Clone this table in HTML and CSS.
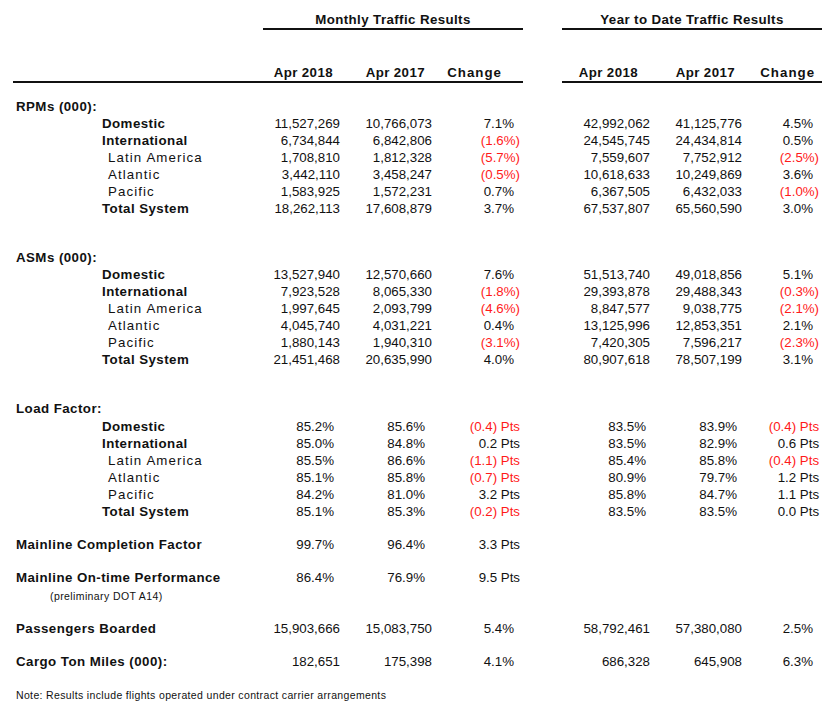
FILE: index.html
```html
<!DOCTYPE html>
<html lang="en">
<head>
<meta charset="utf-8">
<title>Traffic Results</title>
<link rel="stylesheet" href="styles.css">
</head>
<body>
<table class="report">
  <colgroup>
    <col class="c-lbl"><col class="c-a"><col class="c-b"><col class="c-c"><col class="c-sp"><col class="c-d"><col class="c-e"><col class="c-f">
  </colgroup>
  <thead>
    <tr class="title-row">
      <th class="blank"></th>
      <th colspan="3" class="grp">Monthly Traffic Results</th>
      <th class="blank"></th>
      <th colspan="3" class="grp">Year to Date Traffic Results</th>
    </tr>
    <tr class="col-row">
      <th class="line"></th>
      <th class="line h-a">Apr 2018</th>
      <th class="line h-b">Apr 2017</th>
      <th class="line h-c chg">Change</th>
      <th class="blank"></th>
      <th class="line h-d">Apr 2018</th>
      <th class="line h-e">Apr 2017</th>
      <th class="line h-f chg">Change</th>
    </tr>
  </thead>
  <tbody>
    <tr class="g15"><td class="l1">RPMs (000):</td><td></td><td></td><td></td><td></td><td></td><td></td><td></td></tr>
    <tr><td class="l2">Domestic</td><td>11,527,269</td><td>10,766,073</td><td class="pa">7.1%</td><td></td><td>42,992,062</td><td>41,125,776</td><td class="pa">4.5%</td></tr>
    <tr><td class="l2">International</td><td>6,734,844</td><td>6,842,806</td><td class="neg">(1.6%)</td><td></td><td>24,545,745</td><td>24,434,814</td><td class="pa">0.5%</td></tr>
    <tr><td class="l3">Latin America</td><td>1,708,810</td><td>1,812,328</td><td class="neg">(5.7%)</td><td></td><td>7,559,607</td><td>7,752,912</td><td class="neg">(2.5%)</td></tr>
    <tr><td class="l3">Atlantic</td><td>3,442,110</td><td>3,458,247</td><td class="neg">(0.5%)</td><td></td><td>10,618,633</td><td>10,249,869</td><td class="pa">3.6%</td></tr>
    <tr><td class="l3">Pacific</td><td>1,583,925</td><td>1,572,231</td><td class="pa">0.7%</td><td></td><td>6,367,505</td><td>6,432,033</td><td class="neg">(1.0%)</td></tr>
    <tr><td class="l2">Total System</td><td>18,262,113</td><td>17,608,879</td><td class="pa">3.7%</td><td></td><td>67,537,807</td><td>65,560,590</td><td class="pa">3.0%</td></tr>

    <tr class="g32"><td class="l1">ASMs (000):</td><td></td><td></td><td></td><td></td><td></td><td></td><td></td></tr>
    <tr><td class="l2">Domestic</td><td>13,527,940</td><td>12,570,660</td><td class="pa">7.6%</td><td></td><td>51,513,740</td><td>49,018,856</td><td class="pa">5.1%</td></tr>
    <tr><td class="l2">International</td><td>7,923,528</td><td>8,065,330</td><td class="neg">(1.8%)</td><td></td><td>29,393,878</td><td>29,488,343</td><td class="neg">(0.3%)</td></tr>
    <tr><td class="l3">Latin America</td><td>1,997,645</td><td>2,093,799</td><td class="neg">(4.6%)</td><td></td><td>8,847,577</td><td>9,038,775</td><td class="neg">(2.1%)</td></tr>
    <tr><td class="l3">Atlantic</td><td>4,045,740</td><td>4,031,221</td><td class="pa">0.4%</td><td></td><td>13,125,996</td><td>12,853,351</td><td class="pa">2.1%</td></tr>
    <tr><td class="l3">Pacific</td><td>1,880,143</td><td>1,940,310</td><td class="neg">(3.1%)</td><td></td><td>7,420,305</td><td>7,596,217</td><td class="neg">(2.3%)</td></tr>
    <tr><td class="l2">Total System</td><td>21,451,468</td><td>20,635,990</td><td class="pa">4.0%</td><td></td><td>80,907,618</td><td>78,507,199</td><td class="pa">3.1%</td></tr>

    <tr class="g32"><td class="l1">Load Factor:</td><td></td><td></td><td></td><td></td><td></td><td></td><td></td></tr>
    <tr class="g1"><td class="l2">Domestic</td><td class="pa">85.2%</td><td class="pb">85.6%</td><td class="neg">(0.4) Pts</td><td></td><td class="pd">83.5%</td><td class="pe">83.9%</td><td class="neg">(0.4) Pts</td></tr>
    <tr><td class="l2">International</td><td class="pa">85.0%</td><td class="pb">84.8%</td><td>0.2 Pts</td><td></td><td class="pd">83.5%</td><td class="pe">82.9%</td><td>0.6 Pts</td></tr>
    <tr><td class="l3">Latin America</td><td class="pa">85.5%</td><td class="pb">86.6%</td><td class="neg">(1.1) Pts</td><td></td><td class="pd">85.4%</td><td class="pe">85.8%</td><td class="neg">(0.4) Pts</td></tr>
    <tr><td class="l3">Atlantic</td><td class="pa">85.1%</td><td class="pb">85.8%</td><td class="neg">(0.7) Pts</td><td></td><td class="pd">80.9%</td><td class="pe">79.7%</td><td>1.2 Pts</td></tr>
    <tr><td class="l3">Pacific</td><td class="pa">84.2%</td><td class="pb">81.0%</td><td>3.2 Pts</td><td></td><td class="pd">85.8%</td><td class="pe">84.7%</td><td>1.1 Pts</td></tr>
    <tr><td class="l2">Total System</td><td class="pa">85.1%</td><td class="pb">85.3%</td><td class="neg">(0.2) Pts</td><td></td><td class="pd">83.5%</td><td class="pe">83.5%</td><td>0.0 Pts</td></tr>

    <tr class="g16"><td class="l1">Mainline Completion Factor</td><td class="pa">99.7%</td><td class="pb">96.4%</td><td>3.3 Pts</td><td></td><td></td><td></td><td></td></tr>
    <tr class="g16"><td class="l1">Mainline On-time Performance</td><td class="pa">86.4%</td><td class="pb">76.9%</td><td>9.5 Pts</td><td></td><td></td><td></td><td></td></tr>
    <tr class="small-row"><td class="note-sub">(preliminary DOT A14)</td><td></td><td></td><td></td><td></td><td></td><td></td><td></td></tr>

    <tr class="g14"><td class="l1">Passengers Boarded</td><td>15,903,666</td><td>15,083,750</td><td class="pa">5.4%</td><td></td><td>58,792,461</td><td>57,380,080</td><td class="pa">2.5%</td></tr>
    <tr class="g16"><td class="l1">Cargo Ton Miles (000):</td><td>182,651</td><td>175,398</td><td class="pa">4.1%</td><td></td><td>686,328</td><td>645,908</td><td class="pa">6.3%</td></tr>

    <tr class="g17"><td colspan="8" class="note">Note: Results include flights operated under contract carrier arrangements</td></tr>
  </tbody>
</table>
</body>
</html>
```

FILE: styles.css
```css
html, body {
  margin: 0;
  padding: 0;
  background: #ffffff;
}

body {
  font-family: "Liberation Sans", Arial, sans-serif;
  color: #111111;
}

.report {
  border-collapse: separate;
  border-spacing: 0;
  table-layout: fixed;
  width: 809px;
  margin-left: 13px;
  font-size: 13.3px;
}

.c-lbl { width: 250px; }
.c-a { width: 80px; }
.c-b { width: 92px; }
.c-c { width: 88px; }
.c-sp { width: 39px; }
.c-d { width: 91px; }
.c-e { width: 92px; }
.c-f { width: 77px; }

.report th,
.report td {
  padding: 0 3px 0 0;
  line-height: 17px;
  text-align: right;
  white-space: nowrap;
  vertical-align: bottom;
  font-weight: normal;
}

/* header */
.title-row th {
  padding-top: 11px;
}

.report th.grp {
  font-weight: bold;
  letter-spacing: 0.4px;
  text-align: center;
  padding-right: 0;
  border-bottom: 2px solid #111111;
}

.col-row th {
  padding-top: 34px;
  font-weight: bold;
  letter-spacing: 0.4px;
}

.report .col-row th.line {
  border-bottom: 2px solid #111111;
}

.report .col-row th.blank {
  border-bottom: 0;
}

.report .col-row th.chg { letter-spacing: 1px; }
.report .col-row th.h-a { padding-right: 10px; }
.report .col-row th.h-b { padding-right: 10px; }
.report .col-row th.h-c { padding-right: 21px; }
.report .col-row th.h-d { padding-right: 15px; }
.report .col-row th.h-e { padding-right: 10px; }
.report .col-row th.h-f { padding-right: 7px; }

/* labels */
.report td.l1 {
  text-align: left;
  padding-left: 3px;
  font-weight: bold;
  letter-spacing: 0.45px;
}

.report td.l2 {
  text-align: left;
  padding-left: 89px;
  font-weight: bold;
  letter-spacing: 0.45px;
}

.report td.l3 {
  text-align: left;
  padding-left: 95px;
  letter-spacing: 1.1px;
}

.report td.note-sub {
  text-align: left;
  padding-left: 37px;
  font-size: 10.5px;
  line-height: 20px;
  letter-spacing: 0.4px;
}

.report td.note {
  text-align: left;
  padding-left: 3px;
  font-size: 10.5px;
  letter-spacing: 0.35px;
}

/* values */
.report td.neg { color: #ff1a1a; }
.report td.pa { padding-right: 9px; }
.report td.pb { padding-right: 10px; }
.report td.pd { padding-right: 7px; }
.report td.pe { padding-right: 8px; }

/* vertical spacing */
.g15 td { padding-top: 15px; }
.g32 td { padding-top: 32px; }
.g1 td { padding-top: 1px; }
.g14 td { padding-top: 14px; }
.g16 td { padding-top: 16px; }
.g17 td { padding-top: 17px; }
```
